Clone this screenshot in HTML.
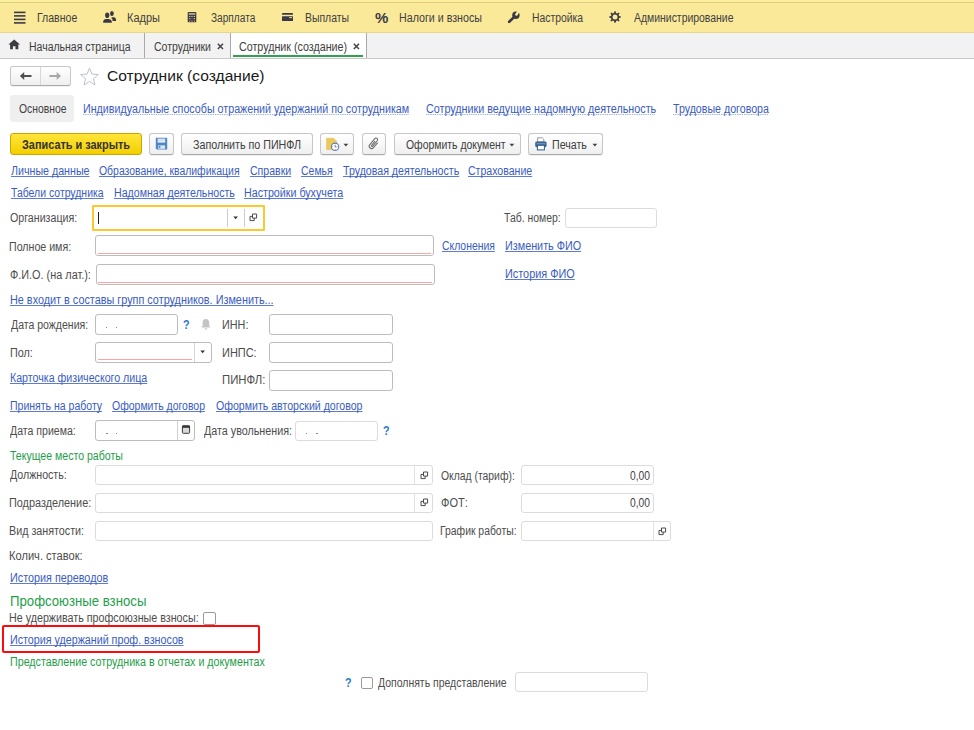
<!DOCTYPE html>
<html><head><meta charset="utf-8"><style>
html,body{margin:0;padding:0;background:#fff;}
body{width:974px;height:730px;position:relative;overflow:hidden;font-family:"Liberation Sans",sans-serif;}
.t{position:absolute;white-space:nowrap;transform-origin:0 0;font-size:12px;line-height:1;color:#4d4d4d;}
.m{color:#404040}
.bold{font-weight:bold;color:#333;}
.title{color:#1a1a1a;}
.lnk{color:#3a5cc0;text-decoration:underline;text-decoration-color:#5d7bd0;text-underline-offset:1px;text-decoration-skip-ink:none}
.dot{text-decoration:underline dotted;text-decoration-color:#8ea3dd}
.grn{color:#1f9e4a}
.q{color:#2a7cc8;font-weight:bold;}
.b{position:absolute;box-sizing:border-box;border:1px solid #c3c3c3;border-radius:3px;background:#fff}
.dk{border-color:#bcbcbc;}
.lt{border-color:#dcdcdc;}
.cb{border-color:#9a9a9a;border-radius:2px}
.btn{position:absolute;box-sizing:border-box;border:1px solid #c6c6c6;border-bottom-color:#a9a9a9;border-radius:3px;background:linear-gradient(#ffffff,#efefef);box-shadow:0 1px 0 rgba(0,0,0,0.06)}
.ybtn{position:absolute;box-sizing:border-box;border:1px solid #c8a600;border-radius:3px;background:linear-gradient(#ffe53a,#f3cf00)}
</style></head><body>
<div style="position:absolute;left:0;top:0;width:974px;height:33px;background:#fbe99a"></div>
<div style="position:absolute;left:0;top:0;width:974px;height:2px;background:#fdee9c"></div>
<div style="position:absolute;left:0;top:2px;width:974px;height:1px;background:#dccd82"></div>
<div style="position:absolute;left:0;top:3px;width:974px;height:1px;background:#fded9c"></div>
<div style="position:absolute;left:0;top:32px;width:974px;height:1px;background:#e6d68a"></div>
<div class="t m" style="left:37.30px;top:12.14px;transform:scaleX(0.8775);">Главное</div>
<div class="t m" style="left:126.70px;top:12.14px;transform:scaleX(0.9150);">Кадры</div>
<div class="t m" style="left:210.70px;top:12.14px;transform:scaleX(0.8427);">Зарплата</div>
<div class="t m" style="left:305.30px;top:12.14px;transform:scaleX(0.8695);">Выплаты</div>
<div class="t m" style="left:398.70px;top:12.14px;transform:scaleX(0.8892);">Налоги и взносы</div>
<div class="t m" style="left:531.70px;top:12.14px;transform:scaleX(0.8656);">Настройка</div>
<div class="t m" style="left:634.30px;top:12.14px;transform:scaleX(0.8695);">Администрирование</div>
<svg style="position:absolute;left:14px;top:11px" width="12" height="13" viewBox="0 0 12 13"><g fill="#3a3a46"><rect x="0" y="0.6" width="11.5" height="1.6"/><rect x="0" y="4.1" width="11.5" height="1.6"/><rect x="0" y="7.6" width="11.5" height="1.6"/><rect x="0" y="11.1" width="11.5" height="1.6"/></g></svg>
<svg style="position:absolute;left:102px;top:10px" width="16" height="14" viewBox="0 0 16 14"><g fill="#3a3a46"><ellipse cx="5.2" cy="5.2" rx="2.1" ry="2.8"/><path d="M1.1 12.7 Q1.1 9.4 3.6 9.0 L6.8 9.0 Q9.9 9.4 9.9 12.7 Z"/><ellipse cx="9.9" cy="3.5" rx="1.9" ry="2.6"/><path d="M9.8 7.3 L12.3 7.2 Q14.1 7.6 14.1 10.9 L10.6 10.9 Q10.6 8.6 9.4 8.2 Z"/></g></svg>
<svg style="position:absolute;left:187px;top:11px" width="11" height="12" viewBox="0 0 11 12"><g><rect x="0.7" y="0.9" width="8.6" height="10.3" rx="0.8" fill="#3a3a46"/><rect x="1.8" y="2.2" width="6.4" height="1.5" fill="#fbe99a" opacity="0.8"/><g fill="#fbe99a"><circle cx="2.8" cy="5.4" r="0.6"/><circle cx="5" cy="5.4" r="0.6"/><circle cx="7.3" cy="5.4" r="0.6"/><circle cx="2.8" cy="7.7" r="0.6"/><circle cx="5" cy="7.7" r="0.6" opacity="0.4"/><circle cx="7.3" cy="7.7" r="0.6"/><circle cx="2.8" cy="10" r="0.6"/><circle cx="5" cy="10" r="0.6"/><circle cx="7.3" cy="10" r="0.6"/></g></g></svg>
<svg style="position:absolute;left:281px;top:12px" width="14" height="10" viewBox="0 0 14 10"><g fill="#3a3a46"><rect x="1" y="1.1" width="11" height="1.7" rx="0.4"/><rect x="1" y="4.3" width="11" height="4.7" rx="0.5"/><rect x="8.2" y="5.0" width="2.8" height="1.2" fill="#fbe99a" opacity="0.8"/></g></svg>
<div class="t" style="left:375px;top:9.5px;font-size:15px;font-weight:bold;color:#3a3a46;letter-spacing:0">%</div>
<svg style="position:absolute;left:507px;top:11px" width="14" height="13" viewBox="0 0 14 13"><line x1="2.2" y1="10.8" x2="7.6" y2="5.6" stroke="#3a3a46" stroke-width="2.7" stroke-linecap="round"/><circle cx="8.9" cy="4.3" r="3.7" fill="#3a3a46"/><path d="M10.42 4.24 L8.38 2.96 L11.03 -1.29 L13.07 -0.01 Z" fill="#fbe99a"/><circle cx="9.4" cy="3.6" r="1.2" fill="#fbe99a"/></svg>
<svg style="position:absolute;left:609.1px;top:11.4px" width="12" height="12" viewBox="0 0 12 12"><polygon points="4.98,1.92 5.38,0.13 6.62,0.13 7.02,1.92 8.16,2.40 9.71,1.41 10.59,2.29 9.60,3.84 10.08,4.98 11.87,5.38 11.87,6.62 10.08,7.02 9.60,8.16 10.59,9.71 9.71,10.59 8.16,9.60 7.02,10.08 6.62,11.87 5.38,11.87 4.98,10.08 3.84,9.60 2.29,10.59 1.41,9.71 2.40,8.16 1.92,7.02 0.13,6.62 0.13,5.38 1.92,4.98 2.40,3.84 1.41,2.29 2.29,1.41 3.84,2.40" fill="#3a3a46"/><circle cx="6" cy="6" r="2.5" fill="#fbe99a"/></svg>
<div style="position:absolute;left:0;top:33px;width:974px;height:26px;background:#f2f2f2;border-bottom:1px solid #cacaca;box-sizing:border-box"></div>
<div style="position:absolute;left:231px;top:33px;width:135px;height:25px;background:#ffffff"></div>
<div style="position:absolute;left:144px;top:33px;width:1px;height:25px;background:#a9a9a9"></div>
<div style="position:absolute;left:230px;top:33px;width:1px;height:25px;background:#a9a9a9"></div>
<div style="position:absolute;left:366px;top:33px;width:1px;height:25px;background:#a9a9a9"></div>
<div style="position:absolute;left:233px;top:55px;width:130px;height:2px;background:#2fa14f"></div>
<div class="t m" style="left:29.30px;top:40.64px;transform:scaleX(0.8740);">Начальная страница</div>
<div class="t m" style="left:153.70px;top:40.64px;transform:scaleX(0.8768);">Сотрудники</div>
<div class="t m" style="left:239.10px;top:40.64px;transform:scaleX(0.8918);">Сотрудник (создание)</div>
<svg style="position:absolute;left:8px;top:39px" width="13" height="11" viewBox="0 0 13 11"><path d="M6.2 0.5 L12 5.6 L10.3 5.6 L10.3 10.3 L7.5 10.3 L7.5 7.3 L4.9 7.3 L4.9 10.3 L2.1 10.3 L2.1 5.6 L0.4 5.6 Z" fill="#3c3c3c"/></svg>
<svg style="position:absolute;left:216.9px;top:42.6px" width="7" height="7" viewBox="0 0 7 7"><path d="M0.8 0.8 L6 6 M6 0.8 L0.8 6" stroke="#444" stroke-width="1.5"/></svg>
<svg style="position:absolute;left:353px;top:42.6px" width="7" height="7" viewBox="0 0 7 7"><path d="M0.8 0.8 L6 6 M6 0.8 L0.8 6" stroke="#444" stroke-width="1.5"/></svg>
<div class="btn" style="left:10px;top:66px;width:61px;height:20px;border-radius:3px"></div>
<div style="position:absolute;left:40px;top:67px;width:1px;height:18px;background:#d8d8d8"></div>
<svg style="position:absolute;left:19px;top:71px" width="14" height="10" viewBox="0 0 14 10"><path d="M0.9 5 L5.2 1 L5.2 3.9 L12.5 3.9 L12.5 6.1 L5.2 6.1 L5.2 9 Z" fill="#505050"/></svg>
<svg style="position:absolute;left:48px;top:71px" width="14" height="10" viewBox="0 0 14 10"><path d="M13 5 L8.7 1 L8.7 3.9 L1.4 3.9 L1.4 6.1 L8.7 6.1 L8.7 9 Z" fill="#a8a8a8"/></svg>
<svg style="position:absolute;left:79px;top:66.5px" width="21" height="20" viewBox="0 0 21 20"><polygon points="10.50,1.00 12.91,7.08 19.44,7.50 14.40,11.67 16.03,18.00 10.50,14.50 4.97,18.00 6.60,11.67 1.56,7.50 8.09,7.08" fill="none" stroke="#bcc3ca" stroke-width="1" stroke-linejoin="miter"/></svg>
<div class="t title" style="left:107.10px;top:68.48px;transform:scaleX(1.0059);font-size:15.5px;">Сотрудник (создание)</div>
<div class="b" style="left:10px;top:95px;width:64px;height:27px;background:#efefef;border-radius:3px;border:none"></div>
<div class="t m" style="left:18.70px;top:103.34px;transform:scaleX(0.8635);">Основное</div>
<div class="t lnk dot" style="left:82.50px;top:103.04px;transform:scaleX(0.8918);">Индивидуальные способы отражений удержаний по сотрудникам</div>
<div class="t lnk dot" style="left:425.50px;top:103.04px;transform:scaleX(0.8961);">Сотрудники ведущие надомную деятельность</div>
<div class="t lnk dot" style="left:672.70px;top:103.04px;transform:scaleX(0.8863);">Трудовые договора</div>
<div class="ybtn" style="left:10px;top:133px;width:132px;height:22px;"></div>
<div class="t bold" style="left:21.90px;top:138.94px;transform:scaleX(0.9085);">Записать и закрыть</div>
<div class="btn" style="left:149px;top:133px;width:25px;height:22px;"></div>
<svg style="position:absolute;left:155px;top:137px" width="13" height="14" viewBox="0 0 13 14"><path d="M0.8 0.8 L11.4 0.8 L12.2 1.6 L12.2 12.4 L1.8 12.4 L0.8 11.4 Z" fill="#4f86c6"/><rect x="2.6" y="1.6" width="7.6" height="4" fill="#e9eef5"/><rect x="2.6" y="2.8" width="7.6" height="0.5" fill="#9fb8d8"/><rect x="3.2" y="8.4" width="6.8" height="3.4" fill="#dfe6ee"/><rect x="3.8" y="9.1" width="1.6" height="1.8" fill="#4f86c6"/></svg>
<div class="btn" style="left:181px;top:133px;width:132px;height:22px;"></div>
<div class="t m" style="left:192.90px;top:138.94px;transform:scaleX(0.8917);">Заполнить по ПИНФЛ</div>
<div class="btn" style="left:320px;top:133px;width:34px;height:22px;"></div>
<svg style="position:absolute;left:325px;top:137px" width="16" height="15" viewBox="0 0 16 15"><path d="M1.6 1.3 L8.6 1.3 L11.6 4.3 L11.6 12.6 L1.6 12.6 Z" fill="#ecca58" stroke="#e3bd45" stroke-width="0.6" stroke-linejoin="round"/><circle cx="10.1" cy="9.8" r="3.7" fill="#fff" stroke="#4a8ad0" stroke-width="1.1"/><g fill="#e05050"><rect x="9.6" y="6.1" width="1" height="1.1"/><rect x="9.6" y="12.4" width="1" height="1.1"/><rect x="6.4" y="9.3" width="1.1" height="1"/><rect x="12.7" y="9.3" width="1.1" height="1"/></g><path d="M10.1 8 V9.9 H11.6" stroke="#3a78c0" stroke-width="0.9" fill="none"/></svg>
<svg style="position:absolute;left:343px;top:143px" width="6" height="4" viewBox="0 0 6 4"><path d="M0.5 0.8 L5.3 0.8 L2.9 3.4 Z" fill="#444"/></svg>
<div class="btn" style="left:362px;top:133px;width:24px;height:22px;"></div>
<svg style="position:absolute;left:367px;top:136px" width="14" height="15" viewBox="0 0 14 15"><g transform="rotate(40 7 7.5)"><path d="M9.3 4.5 V11 A2.4 2.4 0 0 1 4.5 11 V3.3 A1.6 1.6 0 0 1 7.7 3.3 V10.4 A0.7 0.7 0 0 1 6.3 10.4 V5" fill="none" stroke="#707070" stroke-width="1.1"/></g></svg>
<div class="btn" style="left:394px;top:133px;width:127px;height:22px;"></div>
<div class="t m" style="left:405.50px;top:138.94px;transform:scaleX(0.8694);">Оформить документ</div>
<svg style="position:absolute;left:509px;top:143px" width="6" height="4" viewBox="0 0 6 4"><path d="M0.5 0.8 L5.3 0.8 L2.9 3.4 Z" fill="#444"/></svg>
<div class="btn" style="left:528px;top:133px;width:75px;height:22px;"></div>
<svg style="position:absolute;left:534px;top:137px" width="14" height="14" viewBox="0 0 14 14"><path d="M3.6 0.8 H8.2 L9.8 2.4 V5 H3.6 Z" fill="#fff" stroke="#8a9099" stroke-width="0.9"/><rect x="1.2" y="4.6" width="11.4" height="5.6" rx="1.4" fill="#3a6597"/><rect x="2.6" y="6" width="8.6" height="1.4" fill="#6d8fb8"/><rect x="3.4" y="8.3" width="7" height="4.6" fill="#fff" stroke="#2f5a8e" stroke-width="1"/></svg>
<div class="t m" style="left:552.10px;top:138.94px;transform:scaleX(0.8871);">Печать</div>
<svg style="position:absolute;left:591.5px;top:143px" width="6" height="4" viewBox="0 0 6 4"><path d="M0.5 0.8 L5.3 0.8 L2.9 3.4 Z" fill="#444"/></svg>
<div class="t lnk" style="left:11.10px;top:164.84px;transform:scaleX(0.8886);">Личные данные</div>
<div class="t lnk" style="left:99.10px;top:164.84px;transform:scaleX(0.8689);">Образование, квалификация</div>
<div class="t lnk" style="left:249.50px;top:164.84px;transform:scaleX(0.8786);">Справки</div>
<div class="t lnk" style="left:301.10px;top:164.84px;transform:scaleX(0.8722);">Семья</div>
<div class="t lnk" style="left:342.90px;top:164.84px;transform:scaleX(0.8849);">Трудовая деятельность</div>
<div class="t lnk" style="left:468.30px;top:164.84px;transform:scaleX(0.8797);">Страхование</div>
<div class="t lnk" style="left:11.10px;top:186.94px;transform:scaleX(0.8719);">Табели сотрудника</div>
<div class="t lnk" style="left:113.50px;top:186.94px;transform:scaleX(0.8854);">Надомная деятельность</div>
<div class="t lnk" style="left:243.50px;top:186.94px;transform:scaleX(0.8909);">Настройки бухучета</div>
<div class="t " style="left:10.30px;top:212.34px;transform:scaleX(0.8870);">Организация:</div>
<div class="b" style="left:92px;top:205px;width:173px;height:26px;border:2px solid #f8cb2c;border-radius:1px"></div>
<div style="position:absolute;left:226.5px;top:208.5px;width:1px;height:18.5px;background:#cdcdcd"></div>
<div style="position:absolute;left:243.8px;top:208.5px;width:1px;height:18.5px;background:#cdcdcd"></div>
<svg style="position:absolute;left:232.5px;top:215.6px" width="6" height="4" viewBox="0 0 6 4"><path d="M0.3 0.6 L5 0.6 L2.65 3.2 Z" fill="#333"/></svg>
<svg style="position:absolute;left:249px;top:212.5px" width="9" height="9" viewBox="0 0 9 9"><path d="M3.5 1 H7.6 V5.1 H3.5 Z" fill="none" stroke="#4a4a4a" stroke-width="1"/><path d="M3.5 3.4 H1 V7.6 H5.2 V5.1" fill="none" stroke="#4a4a4a" stroke-width="1"/></svg>
<div style="position:absolute;left:98px;top:211.5px;width:1px;height:12px;background:#222"></div>
<div class="t " style="left:504.30px;top:212.14px;transform:scaleX(0.8692);">Таб. номер:</div>
<div class="b lt" style="left:565px;top:208px;width:92px;height:20px;"></div>
<div class="t " style="left:9.30px;top:240.84px;transform:scaleX(0.8854);">Полное имя:</div>
<div class="b dk" style="left:95px;top:235px;width:339px;height:21px;"></div>
<div style="position:absolute;left:97.7px;top:253px;width:333.3px;height:1px;background:#ffa3a3"></div>
<div class="t lnk" style="left:442.30px;top:240.14px;transform:scaleX(0.8668);">Склонения</div>
<div class="t lnk" style="left:504.50px;top:240.14px;transform:scaleX(0.9001);">Изменить ФИО</div>
<div class="t " style="left:10.30px;top:268.74px;transform:scaleX(0.9058);">Ф.И.О. (на лат.):</div>
<div class="b dk" style="left:95.5px;top:263.5px;width:339.0px;height:21.0px;"></div>
<div style="position:absolute;left:98px;top:281.5px;width:333.5px;height:1px;background:#ffa3a3"></div>
<div class="t lnk" style="left:504.50px;top:267.94px;transform:scaleX(0.9065);">История ФИО</div>
<div class="t lnk" style="left:9.90px;top:293.94px;transform:scaleX(0.9035);">Не входит в составы групп сотрудников. Изменить...</div>
<div class="t " style="left:10.50px;top:318.74px;transform:scaleX(0.8772);">Дата рождения:</div>
<div class="b dk" style="left:95px;top:314px;width:83px;height:20.5px;"></div>
<div style="position:absolute;left:105.5px;top:326.5px;width:1.3px;height:1.3px;background:#888"></div>
<div style="position:absolute;left:115.8px;top:326.5px;width:1.3px;height:1.3px;background:#888"></div>
<div class="t q" style="left:183.10px;top:318.74px;transform:scaleX(0.9000);">?</div>
<svg style="position:absolute;left:200px;top:318px" width="12" height="12" viewBox="0 0 12 12"><path d="M5.8 1 C3.3 1 2.6 3 2.6 5 L2.6 8 L1.2 9.6 L10.6 9.6 L9.2 8 L9.2 5 C9.2 3 8.3 1 5.8 1 Z" fill="#c4c4c4"/><rect x="4.6" y="10.2" width="2.6" height="1.4" rx="0.6" fill="#c4c4c4"/></svg>
<div class="t " style="left:222.10px;top:318.74px;transform:scaleX(0.9006);">ИНН:</div>
<div class="b dk" style="left:268.5px;top:314px;width:124.5px;height:20.5px;"></div>
<div class="t " style="left:9.50px;top:346.74px;transform:scaleX(0.9011);">Пол:</div>
<div class="b dk" style="left:95px;top:342px;width:116.5px;height:20.5px;"></div>
<div style="position:absolute;left:193.5px;top:343px;width:1px;height:18.5px;background:#d4d4d4"></div>
<svg style="position:absolute;left:199.7px;top:350.3px" width="6" height="4" viewBox="0 0 6 4"><path d="M0.3 0.6 L5 0.6 L2.65 3.2 Z" fill="#333"/></svg>
<div style="position:absolute;left:97.6px;top:359px;width:94.4px;height:1px;background:#ffa3a3"></div>
<div class="t " style="left:222.10px;top:346.74px;transform:scaleX(0.9144);">ИНПС:</div>
<div class="b dk" style="left:268.5px;top:342px;width:124.5px;height:20.5px;"></div>
<div class="t lnk" style="left:9.90px;top:372.24px;transform:scaleX(0.8870);">Карточка физического лица</div>
<div class="t " style="left:222.10px;top:373.84px;transform:scaleX(0.9452);">ПИНФЛ:</div>
<div class="b dk" style="left:268.5px;top:370px;width:124.5px;height:20.5px;"></div>
<div class="t lnk" style="left:9.50px;top:399.94px;transform:scaleX(0.8760);">Принять на работу</div>
<div class="t lnk" style="left:112.10px;top:399.94px;transform:scaleX(0.8718);">Оформить договор</div>
<div class="t lnk" style="left:215.50px;top:399.94px;transform:scaleX(0.8819);">Оформить авторский договор</div>
<div class="t " style="left:9.70px;top:424.54px;transform:scaleX(0.8798);">Дата приема:</div>
<div class="b dk" style="left:95px;top:420px;width:100px;height:20.5px;"></div>
<div style="position:absolute;left:177.3px;top:421px;width:1px;height:18.5px;background:#cfcfcf"></div>
<svg style="position:absolute;left:181px;top:424px" width="10" height="11" viewBox="0 0 10 11"><rect x="1.4" y="1.9" width="7.2" height="7.4" rx="1" fill="#d9d9d9" stroke="#3c3c3c" stroke-width="1"/><rect x="1" y="1.6" width="8" height="2.2" fill="#333"/><rect x="2.7" y="0.9" width="1" height="1.2" fill="#555"/><rect x="6.2" y="0.9" width="1" height="1.2" fill="#555"/></svg>
<div style="position:absolute;left:106.3px;top:433px;width:1.3px;height:1.3px;background:#888"></div>
<div style="position:absolute;left:115.9px;top:433px;width:1.3px;height:1.3px;background:#888"></div>
<div class="t " style="left:203.70px;top:424.54px;transform:scaleX(0.8951);">Дата увольнения:</div>
<div class="b lt" style="left:295px;top:420.5px;width:83px;height:20.0px;"></div>
<div style="position:absolute;left:306px;top:433px;width:1.3px;height:1.3px;background:#888"></div>
<div style="position:absolute;left:316.4px;top:433px;width:1.3px;height:1.3px;background:#888"></div>
<div class="t q" style="left:383.30px;top:424.54px;transform:scaleX(0.9000);">?</div>
<div class="t grn" style="left:10.10px;top:449.64px;transform:scaleX(0.8806);">Текущее место работы</div>
<div class="t " style="left:9.70px;top:469.34px;transform:scaleX(0.8844);">Должность:</div>
<div class="b lt" style="left:95px;top:465px;width:337.5px;height:20px;"></div>
<div style="position:absolute;left:414px;top:466px;width:1px;height:18px;background:#e2e2e2"></div>
<svg style="position:absolute;left:419.5px;top:470.5px" width="9" height="9" viewBox="0 0 9 9"><path d="M3.5 1 H7.6 V5.1 H3.5 Z" fill="none" stroke="#4a4a4a" stroke-width="1"/><path d="M3.5 3.4 H1 V7.6 H5.2 V5.1" fill="none" stroke="#4a4a4a" stroke-width="1"/></svg>
<div class="t " style="left:440.90px;top:469.54px;transform:scaleX(0.8645);">Оклад (тариф):</div>
<div class="b lt" style="left:520.5px;top:465px;width:133.0px;height:20px;"></div>
<div class="t m" style="left:630.30px;top:469.54px;transform:scaleX(0.8571);">0,00</div>
<div class="t " style="left:8.70px;top:497.14px;transform:scaleX(0.9058);">Подразделение:</div>
<div class="b lt" style="left:95px;top:493px;width:337.5px;height:20px;"></div>
<div style="position:absolute;left:414px;top:494px;width:1px;height:18px;background:#e2e2e2"></div>
<svg style="position:absolute;left:419.5px;top:498.3px" width="9" height="9" viewBox="0 0 9 9"><path d="M3.5 1 H7.6 V5.1 H3.5 Z" fill="none" stroke="#4a4a4a" stroke-width="1"/><path d="M3.5 3.4 H1 V7.6 H5.2 V5.1" fill="none" stroke="#4a4a4a" stroke-width="1"/></svg>
<div class="t " style="left:441.30px;top:497.14px;transform:scaleX(0.9185);">ФОТ:</div>
<div class="b lt" style="left:520.5px;top:493px;width:133.0px;height:20px;"></div>
<div class="t m" style="left:630.30px;top:497.14px;transform:scaleX(0.8571);">0,00</div>
<div class="t " style="left:8.70px;top:524.94px;transform:scaleX(0.8940);">Вид занятости:</div>
<div class="b lt" style="left:95px;top:521px;width:337.5px;height:20px;"></div>
<div class="t " style="left:440.30px;top:524.94px;transform:scaleX(0.8654);">График работы:</div>
<div class="b lt" style="left:520.5px;top:521px;width:150.0px;height:20px;"></div>
<div style="position:absolute;left:652.5px;top:522px;width:1px;height:18px;background:#e2e2e2"></div>
<svg style="position:absolute;left:657.5px;top:526.5px" width="9" height="9" viewBox="0 0 9 9"><path d="M3.5 1 H7.6 V5.1 H3.5 Z" fill="none" stroke="#4a4a4a" stroke-width="1"/><path d="M3.5 3.4 H1 V7.6 H5.2 V5.1" fill="none" stroke="#4a4a4a" stroke-width="1"/></svg>
<div class="t " style="left:8.70px;top:550.34px;transform:scaleX(0.9259);">Колич. ставок:</div>
<div class="t lnk" style="left:9.90px;top:572.04px;transform:scaleX(0.8999);">История переводов</div>
<div class="t grn" style="left:9.90px;top:593.75px;transform:scaleX(0.9419);font-size:14px;">Профсоюзные взносы</div>
<div class="t " style="left:9.30px;top:612.14px;transform:scaleX(0.8928);">Не удерживать профсоюзные взносы:</div>
<div class="b cb" style="left:203px;top:612px;width:13px;height:13px;"></div>
<div style="position:absolute;left:2px;top:624.6px;width:257.6px;height:28.6px;box-sizing:border-box;border:2.3px solid #fb0b0b;border-radius:2px"></div>
<div class="t lnk" style="left:9.90px;top:634.04px;transform:scaleX(0.8923);">История удержаний проф. взносов</div>
<div class="t grn" style="left:9.90px;top:656.14px;transform:scaleX(0.8913);">Представление сотрудника в отчетах и документах</div>
<div class="t q" style="left:344.90px;top:676.74px;transform:scaleX(0.9000);">?</div>
<div class="b cb" style="left:360.5px;top:676.5px;width:12.0px;height:12.5px;"></div>
<div class="t " style="left:377.70px;top:676.94px;transform:scaleX(0.8728);">Дополнять представление</div>
<div class="b lt" style="left:514.5px;top:672px;width:133.0px;height:19.5px;"></div>
</body></html>
